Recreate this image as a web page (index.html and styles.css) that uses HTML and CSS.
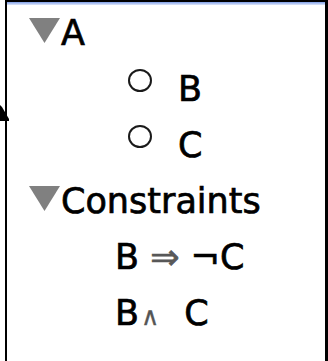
FILE: index.html
```html
<!DOCTYPE html>
<html>
<head>
<meta charset="utf-8">
<link rel="stylesheet" href="styles.css">
</head>
<body>
<div class="frame">
  <div class="panel">
    <div class="topglow"></div>
    <div class="row group"><svg class="disclosure" width="31" height="25" viewBox="0 0 31 25"><polygon points="0,0 31,0 15.5,25" fill="#808080"/></svg>A</div>
    <div class="row item"><span class="radio"></span>B</div>
    <div class="row item"><span class="radio"></span>C</div>
    <div class="row group"><svg class="disclosure" width="31" height="25" viewBox="0 0 31 25"><polygon points="0,0 31,0 15.5,25" fill="#808080"/></svg>Constraints</div>
    <div class="row expr">B <span class="op imp">⇒</span> ¬C</div>
    <div class="row expr">B<span class="op and">∧</span>C</div>
  </div>
  <svg class="cursor" width="10" height="20" viewBox="0 0 10 20"><polygon points="0,2 2,4 9,16 9,18 0,18" fill="#000"/></svg>
</div>
</body>
</html>
```
FILE: styles.css
```css
html, body {
  margin: 0;
  padding: 0;
  background: #fff;
}
.frame {
  position: relative;
  width: 328px;
  height: 361px;
  padding-left: 5px;
  box-sizing: border-box;
  background: #fff;
  overflow: hidden;
}
.panel {
  height: 361px;
  box-sizing: border-box;
  border-top: 2px solid #000;
  border-left: 2px solid #000;
  border-right: 3px solid #000;
  background: #fff;
  font-family: "DejaVu Sans", sans-serif;
  font-size: 35px;
  color: #000;
  -webkit-text-stroke: 0.7px #000;
}
.topglow {
  height: 3px;
  background: linear-gradient(#7f9fe8, #dfe7fa);
}
.row {
  height: 56px;
  line-height: 56px;
  white-space: nowrap;
}
.group {
  padding-left: 22px;
}
.disclosure {
  vertical-align: baseline;
  margin-bottom: 2px;
  margin-right: 1px;
}
.item {
  padding-left: 121px;
}
.radio {
  display: inline-block;
  width: 24px;
  height: 23px;
  box-sizing: border-box;
  border: 2.5px solid #1a1a1a;
  border-radius: 50%;
  vertical-align: baseline;
  margin-bottom: 9px;
  margin-right: 26px;
}
.expr {
  padding-left: 108px;
}
.op {
  color: #555;
  -webkit-text-stroke: 0.7px #555;
}
.imp {
  color: #5a5a5a;
}
.and {
  font-size: 25px;
  margin-left: 2px;
  margin-right: 25px;
  -webkit-text-stroke: 0.3px #555;
}
.cursor {
  position: absolute;
  left: 0;
  top: 103px;
}
```
